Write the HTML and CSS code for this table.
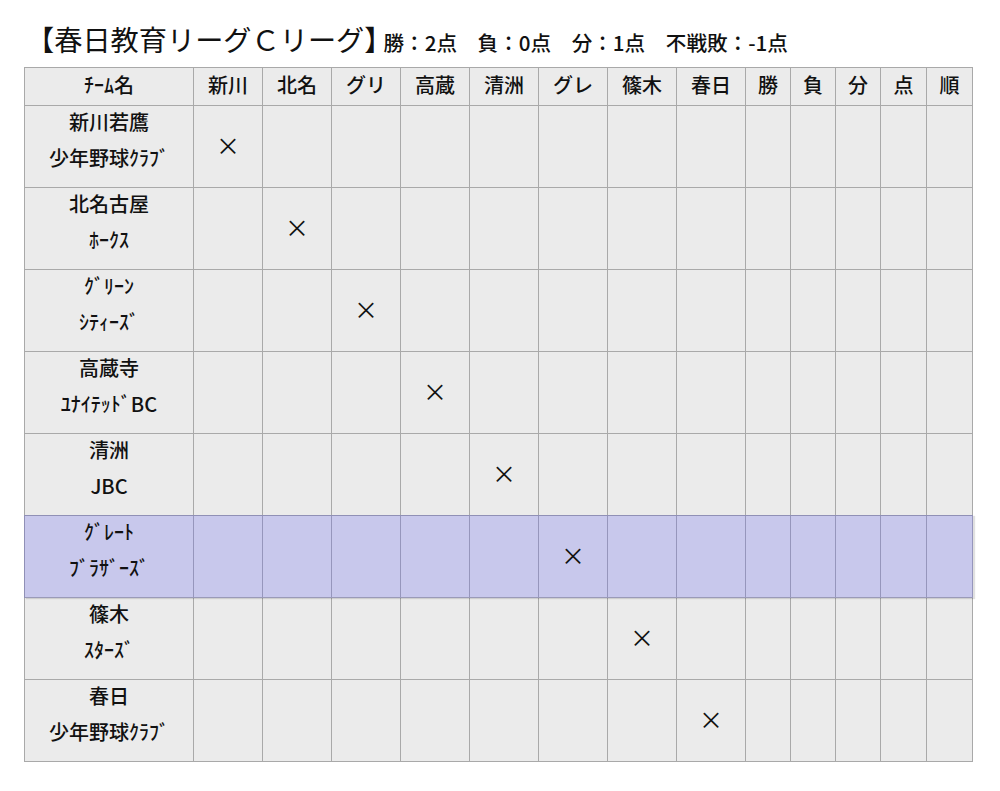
FILE: index.html
```html
<!DOCTYPE html>
<html lang="ja">
<head>
<meta charset="utf-8">
<title>春日教育リーグＣリーグ</title>
<link rel="stylesheet" href="styles.css">
</head>
<body>
<div class="page">
  <h1 class="title"><span class="league">【春日教育リーグＣリーグ】</span><span class="rules">勝：2点　負：0点　分：1点　不戦敗：-1点</span></h1>
  <div class="board">
    <div class="row head">
      <div class="cell">ﾁｰﾑ名</div>
      <div class="cell">新川</div>
      <div class="cell">北名</div>
      <div class="cell">グリ</div>
      <div class="cell">高蔵</div>
      <div class="cell">清洲</div>
      <div class="cell">グレ</div>
      <div class="cell">篠木</div>
      <div class="cell">春日</div>
      <div class="cell">勝</div>
      <div class="cell">負</div>
      <div class="cell">分</div>
      <div class="cell">点</div>
      <div class="cell">順</div>
    </div>
    <div class="row">
      <div class="cell team"><div class="name">新川若鷹<br>少年野球ｸﾗﾌﾞ</div></div>
      <div class="cell"><span class="x">×</span></div>
      <div class="cell"></div><div class="cell"></div><div class="cell"></div><div class="cell"></div><div class="cell"></div><div class="cell"></div><div class="cell"></div>
      <div class="cell"></div><div class="cell"></div><div class="cell"></div><div class="cell"></div><div class="cell"></div>
    </div>
    <div class="row">
      <div class="cell team"><div class="name">北名古屋<br>ﾎｰｸｽ</div></div>
      <div class="cell"></div>
      <div class="cell"><span class="x">×</span></div>
      <div class="cell"></div><div class="cell"></div><div class="cell"></div><div class="cell"></div><div class="cell"></div><div class="cell"></div>
      <div class="cell"></div><div class="cell"></div><div class="cell"></div><div class="cell"></div><div class="cell"></div>
    </div>
    <div class="row">
      <div class="cell team"><div class="name">ｸﾞﾘｰﾝ<br>ｼﾃｨｰｽﾞ</div></div>
      <div class="cell"></div><div class="cell"></div>
      <div class="cell"><span class="x">×</span></div>
      <div class="cell"></div><div class="cell"></div><div class="cell"></div><div class="cell"></div><div class="cell"></div>
      <div class="cell"></div><div class="cell"></div><div class="cell"></div><div class="cell"></div><div class="cell"></div>
    </div>
    <div class="row">
      <div class="cell team"><div class="name">高蔵寺<br>ﾕﾅｲﾃｯﾄﾞBC</div></div>
      <div class="cell"></div><div class="cell"></div><div class="cell"></div>
      <div class="cell"><span class="x">×</span></div>
      <div class="cell"></div><div class="cell"></div><div class="cell"></div><div class="cell"></div>
      <div class="cell"></div><div class="cell"></div><div class="cell"></div><div class="cell"></div><div class="cell"></div>
    </div>
    <div class="row">
      <div class="cell team"><div class="name">清洲<br>JBC</div></div>
      <div class="cell"></div><div class="cell"></div><div class="cell"></div><div class="cell"></div>
      <div class="cell"><span class="x">×</span></div>
      <div class="cell"></div><div class="cell"></div><div class="cell"></div>
      <div class="cell"></div><div class="cell"></div><div class="cell"></div><div class="cell"></div><div class="cell"></div>
    </div>
    <div class="row hl">
      <div class="cell team"><div class="name">ｸﾞﾚｰﾄ<br>ﾌﾞﾗｻﾞｰｽﾞ</div></div>
      <div class="cell"></div><div class="cell"></div><div class="cell"></div><div class="cell"></div><div class="cell"></div>
      <div class="cell"><span class="x">×</span></div>
      <div class="cell"></div><div class="cell"></div>
      <div class="cell"></div><div class="cell"></div><div class="cell"></div><div class="cell"></div><div class="cell"></div>
    </div>
    <div class="row">
      <div class="cell team"><div class="name">篠木<br>ｽﾀｰｽﾞ</div></div>
      <div class="cell"></div><div class="cell"></div><div class="cell"></div><div class="cell"></div><div class="cell"></div><div class="cell"></div>
      <div class="cell"><span class="x">×</span></div>
      <div class="cell"></div>
      <div class="cell"></div><div class="cell"></div><div class="cell"></div><div class="cell"></div><div class="cell"></div>
    </div>
    <div class="row">
      <div class="cell team"><div class="name">春日<br>少年野球ｸﾗﾌﾞ</div></div>
      <div class="cell"></div><div class="cell"></div><div class="cell"></div><div class="cell"></div><div class="cell"></div><div class="cell"></div><div class="cell"></div>
      <div class="cell"><span class="x">×</span></div>
      <div class="cell"></div><div class="cell"></div><div class="cell"></div><div class="cell"></div><div class="cell"></div>
    </div>
  </div>
</div>
</body>
</html>
```

FILE: styles.css
```css
html, body {
  margin: 0;
  padding: 0;
  background: #ffffff;
}

body {
  font-family: "Noto Sans CJK JP", "Noto Sans", sans-serif;
  color: #111111;
  font-weight: 500;
}

.page {
  padding-left: 24px;
}

.title {
  display: flex;
  align-items: baseline;
  margin: 0;
  padding: 25px 0 14px 2px;
  height: 28px;
  font-weight: 400;
}

.league {
  font-size: 28.2px;
  line-height: 28px;
}

.rules {
  font-size: 20.6px;
  line-height: 20px;
  margin-left: -9px;
  font-weight: 500;
}

.board {
  width: 948px;
  border-top: 1px solid #a9a9a9;
  border-left: 1px solid #a9a9a9;
  display: flex;
  flex-direction: column;
}

.row {
  display: grid;
  grid-template-columns: 169px repeat(8, 69px) repeat(3, 45px) repeat(2, 46px);
  height: 82px;
  background: #ebebeb;
}

.row.head {
  height: 38px;
}

.cell {
  border-right: 1px solid #a9a9a9;
  border-bottom: 1px solid #a9a9a9;
  display: flex;
  align-items: center;
  justify-content: center;
  font-size: 20px;
  line-height: 37px;
}

.head .cell {
  padding-bottom: 3px;
  line-height: 34px;
}

.team {
  align-items: flex-start;
}

.name {
  margin-top: -2px;
  line-height: 36px;
  text-align: center;
  white-space: nowrap;
}

.x {
  font-size: 24px;
  line-height: 24px;
  font-weight: 400;
  margin-top: -4px;
}

.row.hl {
  background: #c8c8ec;
  margin-top: -1px;
  margin-left: -1px;
  border-top: 1px solid #9090b6;
  border-left: 1px solid #9090b6;
  box-shadow: 2px 1px 1px rgba(0, 0, 0, 0.12);
  position: relative;
}

.row.hl .cell {
  border-right-color: #9696bc;
  border-bottom-color: #9a9ab8;
}
```
